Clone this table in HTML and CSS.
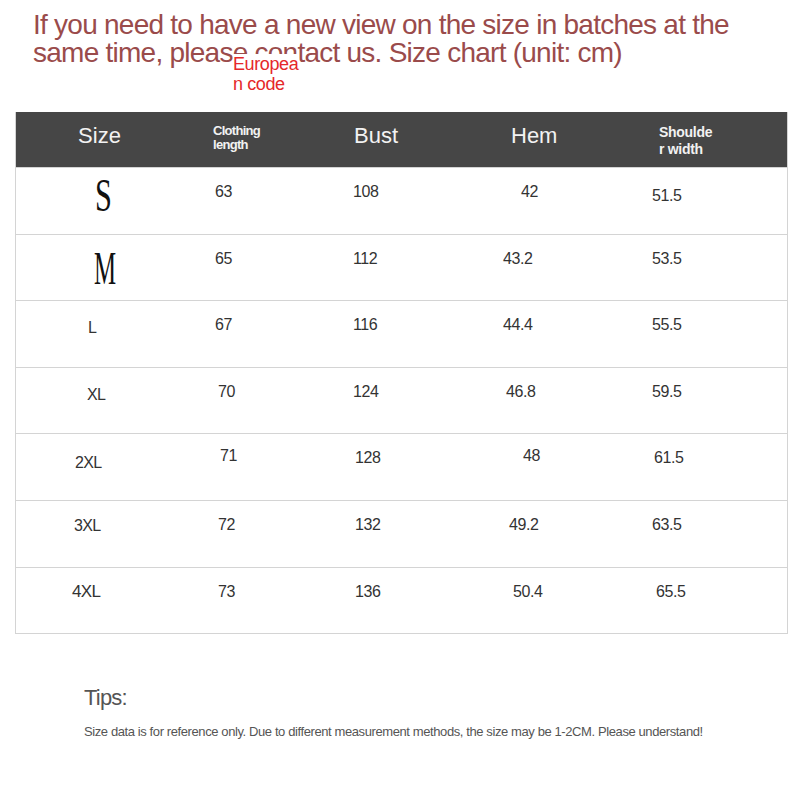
FILE: index.html
```html
<!DOCTYPE html>
<html>
<head>
<meta charset="utf-8">
<link rel="stylesheet" href="styles.css">
</head>
<body>
<div class="page">
  <div class="title">
    <p class="title-text">If you need to have a new view on the size in batches at the same time, please contact us. Size chart (unit: cm)</p>
    <div class="eu-tag">Europea<br>n code</div>
  </div>

  <div class="chart">
    <div class="row head">
      <div class="c c1"><span class="h-big">Size</span></div>
      <div class="c c2"><span class="h-small">Clothing<br>length</span></div>
      <div class="c c3"><span class="h-big">Bust</span></div>
      <div class="c c4"><span class="h-big">Hem</span></div>
      <div class="c c5"><span class="h-small h-wide">Shoulde<br>r width</span></div>
    </div>
    <div class="row">
      <div class="c c1"><span class="sz serif s-s">S</span></div>
      <div class="c c2">63</div>
      <div class="c c3">108</div>
      <div class="c c4 r-42">42</div>
      <div class="c c5 low">51.5</div>
    </div>
    <div class="row">
      <div class="c c1"><span class="sz serif s-m">M</span></div>
      <div class="c c2">65</div>
      <div class="c c3">112</div>
      <div class="c c4">43.2</div>
      <div class="c c5">53.5</div>
    </div>
    <div class="row">
      <div class="c c1"><span class="sz s-l">L</span></div>
      <div class="c c2">67</div>
      <div class="c c3">116</div>
      <div class="c c4">44.4</div>
      <div class="c c5">55.5</div>
    </div>
    <div class="row">
      <div class="c c1"><span class="sz s-xl">XL</span></div>
      <div class="c c2 nudge">70</div>
      <div class="c c3">124</div>
      <div class="c c4 r-468">46.8</div>
      <div class="c c5">59.5</div>
    </div>
    <div class="row">
      <div class="c c1"><span class="sz s-2xl">2XL</span></div>
      <div class="c c2 up">71</div>
      <div class="c c3 nudge">128</div>
      <div class="c c4 r-48">48</div>
      <div class="c c5 nudge">61.5</div>
    </div>
    <div class="row">
      <div class="c c1"><span class="sz s-3xl">3XL</span></div>
      <div class="c c2 nudge">72</div>
      <div class="c c3 nudge">132</div>
      <div class="c c4 r-492">49.2</div>
      <div class="c c5">63.5</div>
    </div>
    <div class="row">
      <div class="c c1"><span class="sz s-4xl">4XL</span></div>
      <div class="c c2 nudge">73</div>
      <div class="c c3 nudge">136</div>
      <div class="c c4 r-504">50.4</div>
      <div class="c c5 r-655">65.5</div>
    </div>
  </div>

  <div class="tips">
    <div class="tips-title">Tips:</div>
    <div class="tips-text">Size data is for reference only. Due to different measurement methods, the size may be 1-2CM. Please understand!</div>
  </div>
</div>
</body>
</html>
```

FILE: styles.css
```css
html, body {
  margin: 0;
  padding: 0;
  background: #ffffff;
}
body {
  font-family: "Liberation Sans", Arial, sans-serif;
  color: #333333;
}
.page {
  width: 800px;
  height: 800px;
  overflow: hidden;
  padding: 0 12px 0 15px;
  box-sizing: border-box;
}
.title {
  position: relative;
  padding-left: 18px;
  height: 112px;
}
.title-text {
  margin: 0;
  padding-top: 11px;
  font-size: 28px;
  line-height: 28px;
  letter-spacing: -0.75px;
  color: #9a4b4b;
  width: 735px;
}
.eu-tag {
  position: absolute;
  left: 218px;
  top: 54px;
  background: #ffffff;
  color: #e5282a;
  font-size: 18px;
  line-height: 20px;
  letter-spacing: -0.4px;
}
.chart {
  width: 773px;
  border: 1px solid #d4d4d4;
  border-top: none;
  box-sizing: border-box;
}
.row {
  display: grid;
  grid-template-columns: 155px 160px 150px 150px 1fr;
  height: 66.6px;
  border-top: 1px solid #d4d4d4;
  box-sizing: border-box;
  font-size: 16px;
  letter-spacing: -0.4px;
  color: #333333;
}
.row.head {
  height: 55px;
  border-top: none;
  background: #464646;
  color: #f2f2f2;
  letter-spacing: 0;
}
.c {
  padding-top: 14px;
  line-height: 20px;
}
.c2 { padding-left: 44px; }
.c2.nudge { padding-left: 47px; }
.c2.up { padding-left: 49px; padding-top: 12px; }
.c3 { padding-left: 22px; }
.c3.nudge { padding-left: 24px; }
.c4 { padding-left: 22px; }
.c4.r-42 { padding-left: 40px; }
.c4.r-468 { padding-left: 25px; }
.c4.r-48 { padding-left: 42px; padding-top: 12px; }
.c4.r-492 { padding-left: 28px; }
.c4.r-504 { padding-left: 32px; }
.c5 { padding-left: 21px; }
.c5.nudge { padding-left: 23px; }
.c5.r-655 { padding-left: 25px; }
.c5.low { padding-top: 18px; }
.head .c { padding-top: 11px; }
.head .c1 { text-align: center; padding-left: 12px; }
.head .c2 { padding-left: 42px; padding-top: 12px; }
.head .c3 { padding-left: 23px; }
.head .c4 { padding-left: 30px; }
.head .c5 { padding-left: 28px; padding-top: 12px; }
.h-big {
  font-size: 22px;
  line-height: 26px;
  display: inline-block;
}
.h-small {
  font-size: 13px;
  line-height: 14px;
  font-weight: bold;
  letter-spacing: -0.7px;
  display: inline-block;
}
.h-small.h-wide {
  font-size: 14px;
  line-height: 17px;
  letter-spacing: -0.3px;
}
.sz {
  display: inline-block;
  font-size: 16px;
  line-height: 20px;
  letter-spacing: -0.6px;
}
.serif {
  font-family: "Liberation Serif", "Times New Roman", serif;
  font-size: 46px;
  line-height: 46px;
  letter-spacing: 0;
  transform: scaleX(0.6);
  transform-origin: left center;
  color: #111111;
}
.s-s { margin-left: 79px; margin-top: -9px; transform: scaleX(0.66); }
.s-m { margin-left: 78px; margin-top: -3px; transform: scaleX(0.54); }
.s-l { margin-left: 72px; margin-top: 3px; }
.s-xl { margin-left: 71px; margin-top: 3px; }
.s-2xl { margin-left: 59px; margin-top: 5px; }
.s-3xl { margin-left: 58px; margin-top: 1px; }
.s-4xl { margin-left: 56px; margin-top: 0; font-size: 17px; }
.tips {
  padding: 50px 0 0 69px;
  color: #555555;
}
.tips-title {
  font-size: 22px;
  line-height: 28px;
  letter-spacing: -0.8px;
}
.tips-text {
  margin-top: 12px;
  font-size: 13px;
  line-height: 16px;
  letter-spacing: -0.4px;
}
```
